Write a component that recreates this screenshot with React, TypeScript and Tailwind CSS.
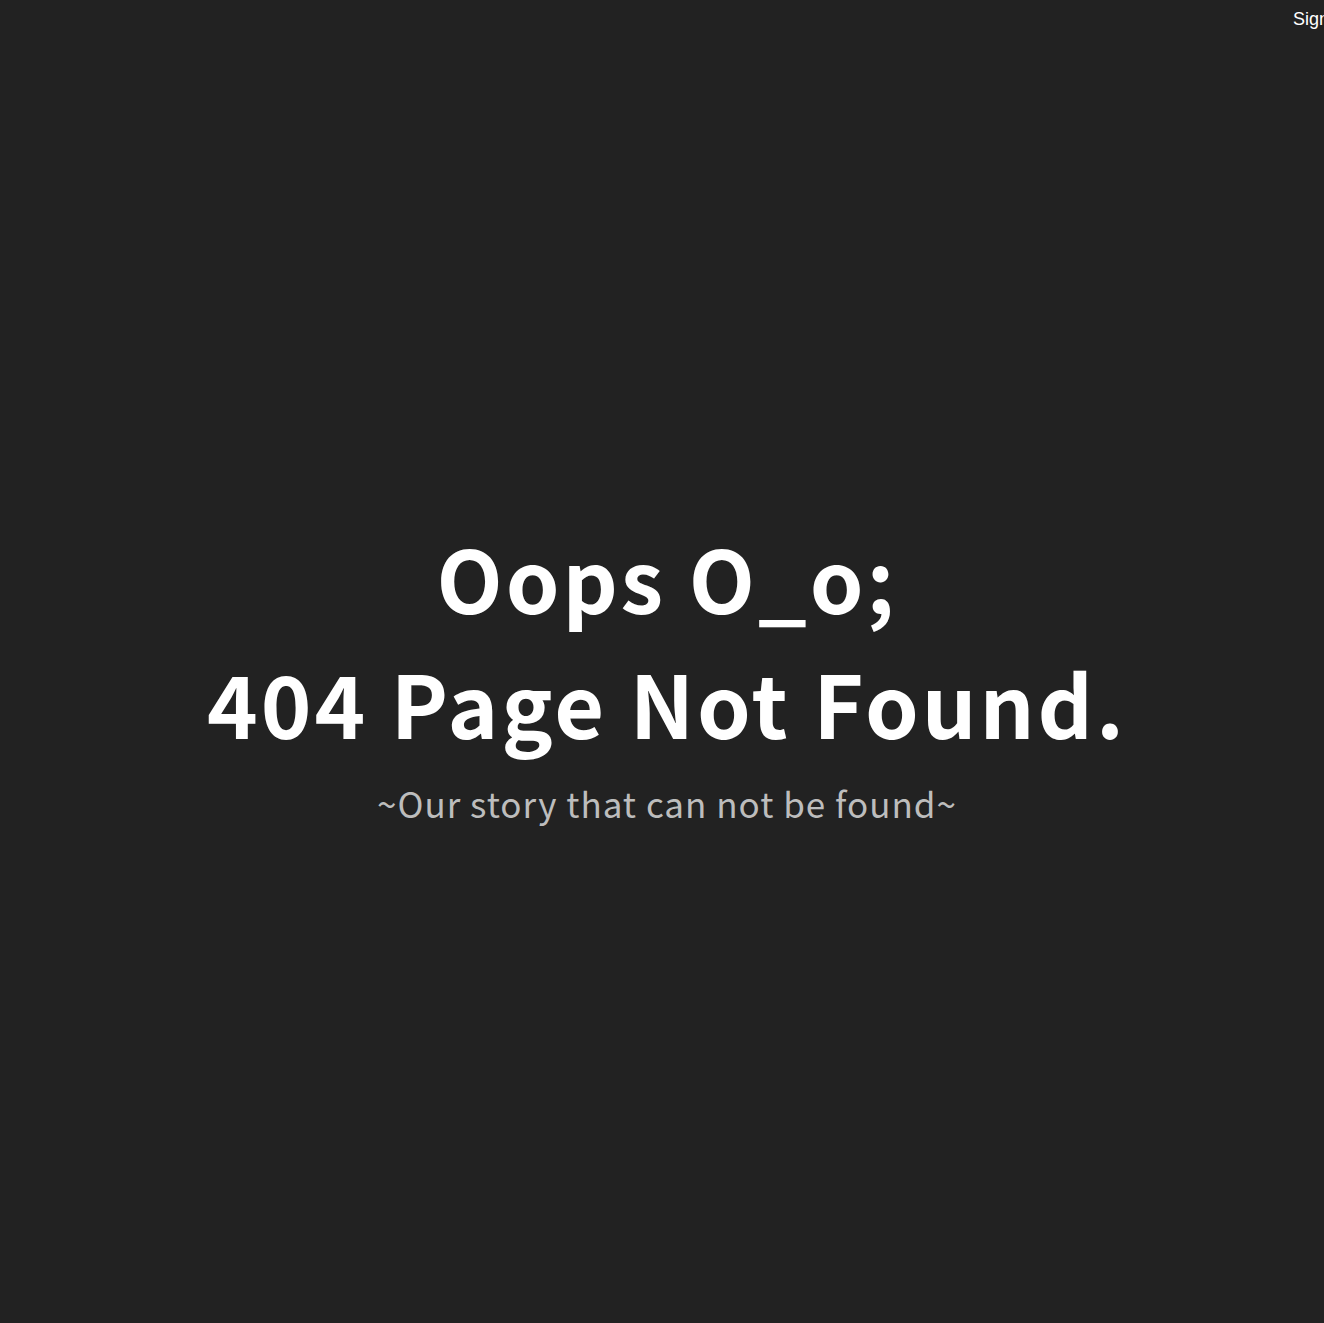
export default function App() {
  return (
    <div className="relative w-[1324px] h-[1323px] overflow-hidden bg-[#222222]">
      <a className="absolute left-[1293px] top-[6px] whitespace-nowrap text-[18px] text-white" style={{ fontFamily: '"Liberation Sans", Arial, sans-serif' }}>
        Sign in
      </a>
      <div className="flex h-full flex-col items-center justify-center pt-[16px] pl-[10px] text-center" style={{ fontFamily: '"Noto Sans CJK KR", "Noto Sans", sans-serif' }}>
        <h1 className="text-[86px] font-bold leading-[125px] text-white tracking-[3px]">
          Oops O_o;
          <br />
          404 Page Not Found.
        </h1>
        <p className="mt-[16px] text-[35px] leading-[46px] text-[#bdbdbd] tracking-[1px]">~Our story that can not be found~</p>
      </div>
    </div>
  );
}
